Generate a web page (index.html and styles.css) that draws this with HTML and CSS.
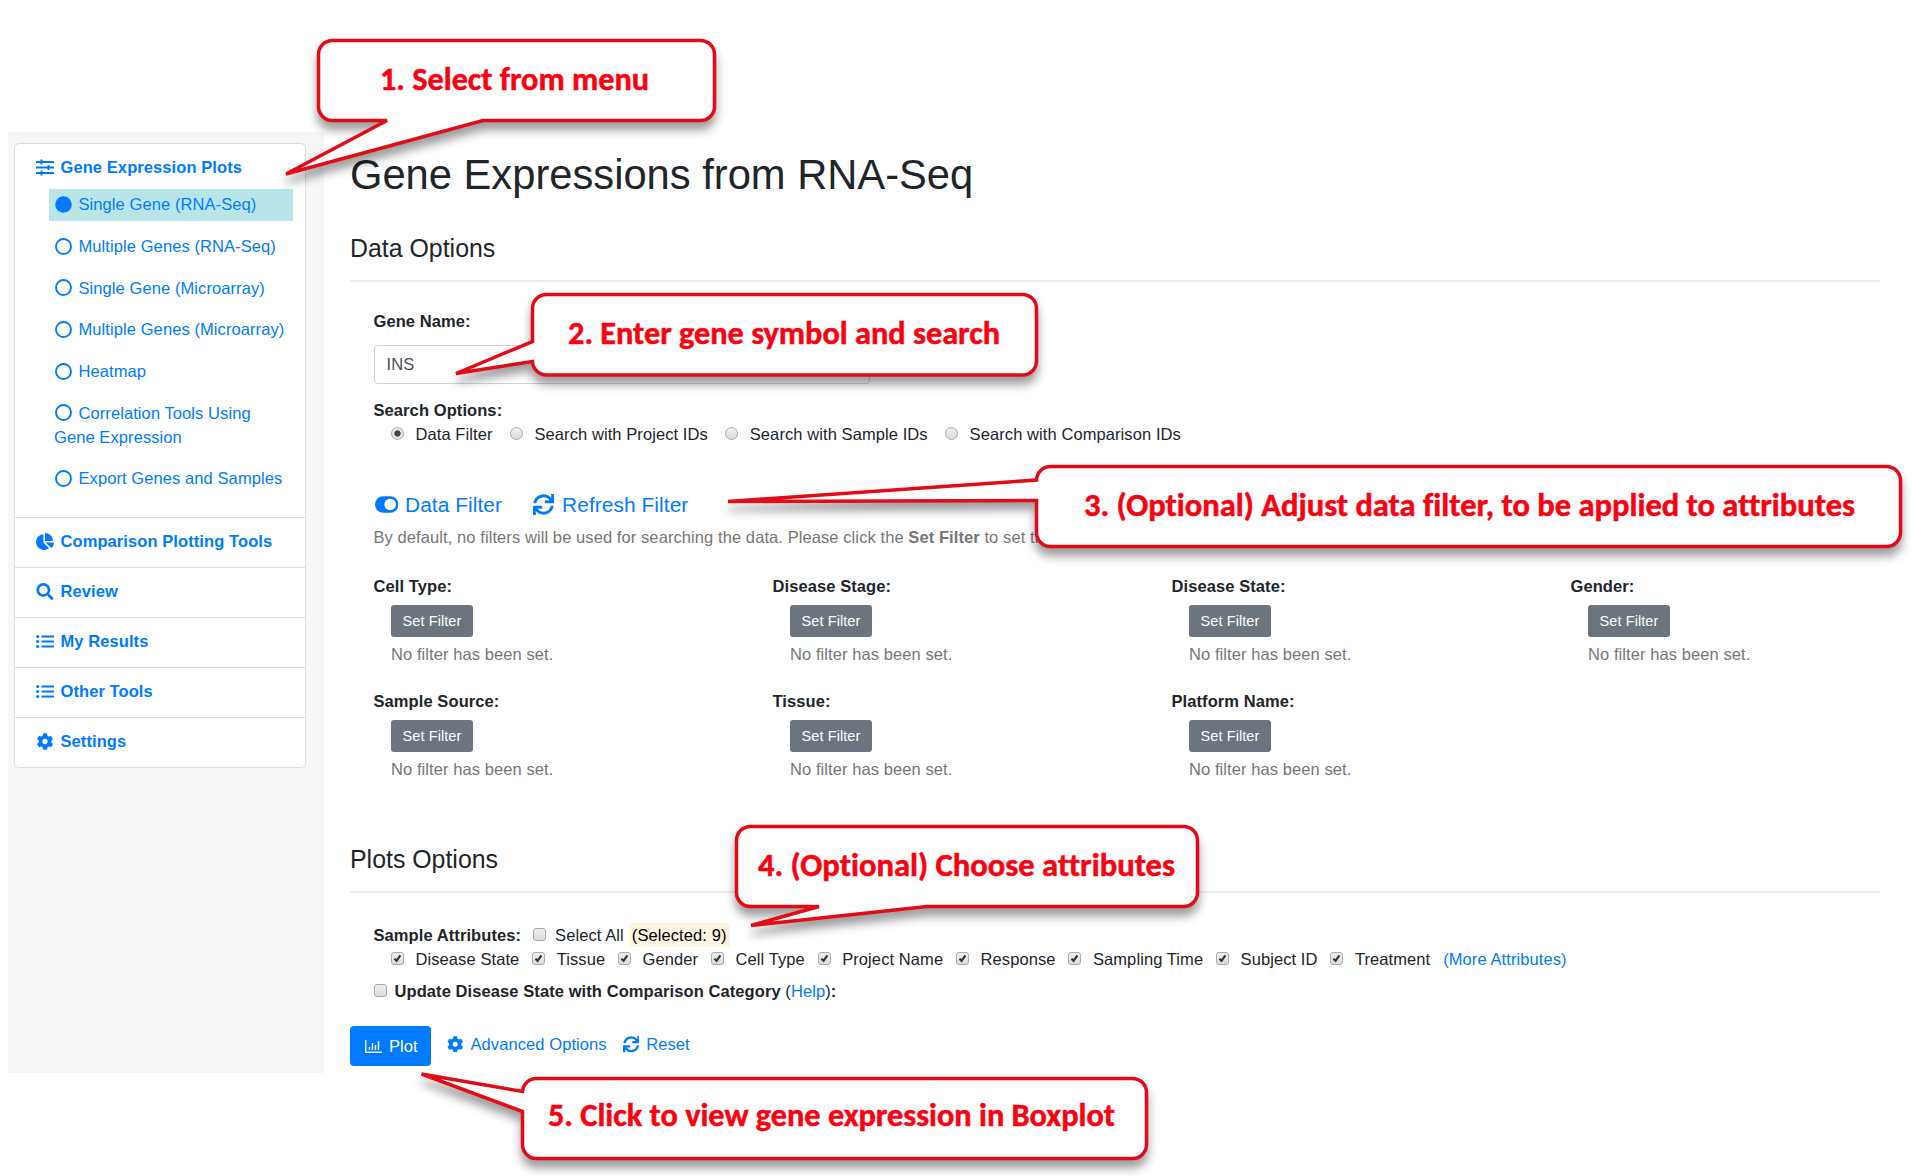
FILE: index.html
```html
<!DOCTYPE html>
<html lang="en">
<head>
<meta charset="utf-8">
<title>Gene Expressions from RNA-Seq</title>
<link rel="stylesheet" href="styles.css">
</head>
<body>
<svg class="defs" aria-hidden="true">
  <symbol id="sliders" viewBox="0 0 18 16"><path d="M0 2.5h18M0 8h18M0 13.5h18M5.500 0v5M12.500 5.500v5M5.500 11v5" fill="none" stroke="currentColor" stroke-width="2"/></symbol>
  <symbol id="dot" viewBox="0 0 17 17"><circle cx="8.500" cy="8.500" r="8.300" fill="currentColor"/></symbol>
  <symbol id="ring" viewBox="0 0 17 17"><circle cx="8.500" cy="8.500" r="7.500" fill="none" stroke="currentColor" stroke-width="1.900"/></symbol>
  <symbol id="pie" viewBox="0 0 544 512"><path fill="currentColor" d="M527.790 288H290.500l158.030 158.030c6.040 6.040 15.980 6.530 22.190.680 38.700-36.460 65.320-85.560 73.130-140.860 1.340-9.460-6.510-17.850-16.060-17.850zm-15.830-64.800C503.720 103.740 408.260 8.280 288.800.040 279.680-.590 272 7.100 272 16.240V240h223.770c9.140 0 16.820-7.680 16.190-16.800zM224 288V50.710c0-9.550-8.390-17.400-17.840-16.060C86.990 51.490-4.100 155.600.140 280.370 4.500 408.510 114.830 513.590 243.030 511.980c50.400-.630 96.970-16.870 135.260-44.030 7.900-5.600 8.420-17.230 1.570-24.080L224 288z"/></symbol>
  <symbol id="search" viewBox="0 0 512 512"><path fill="currentColor" d="M505 442.700L405.300 343c-4.500-4.500-10.600-7-17-7H372c27.600-35.300 44-79.700 44-128C416 93.100 322.900 0 208 0S0 93.100 0 208s93.100 208 208 208c48.300 0 92.700-16.400 128-44v16.300c0 6.400 2.500 12.500 7 17l99.700 99.700c9.400 9.400 24.600 9.400 33.900 0l28.300-28.300c9.400-9.400 9.400-24.600.100-34zM208 336c-70.700 0-128-57.200-128-128 0-70.700 57.200-128 128-128 70.700 0 128 57.200 128 128 0 70.700-57.200 128-128 128z"/></symbol>
  <symbol id="list" viewBox="0 0 18 14"><path d="M5.500 2H18M5.500 7H18M5.500 12H18" stroke="currentColor" stroke-width="2"/><g fill="currentColor"><circle cx="1.700" cy="2" r="1.600"/><circle cx="1.700" cy="7" r="1.600"/><circle cx="1.700" cy="12" r="1.600"/></g></symbol>
  <symbol id="cog" viewBox="0 0 512 512"><path fill="currentColor" d="M487.400 315.700l-42.600-24.600c4.300-23.200 4.300-47 0-70.200l42.600-24.600c4.900-2.800 7.100-8.600 5.500-14-11.100-35.600-30-67.800-54.700-94.600-3.800-4.100-10-5.100-14.800-2.300L380.800 110c-17.900-15.400-38.500-27.300-60.800-35.100V25.800c0-5.600-3.900-10.500-9.400-11.700-36.700-8.200-74.300-7.800-109.200 0-5.500 1.200-9.400 6.100-9.400 11.700V75c-22.200 7.900-42.800 19.800-60.800 35.100L88.700 85.500c-4.900-2.800-11-1.900-14.800 2.300-24.700 26.700-43.600 58.900-54.700 94.600-1.700 5.400.600 11.200 5.500 14L67.300 221c-4.300 23.200-4.300 47 0 70.200l-42.600 24.600c-4.900 2.800-7.100 8.600-5.500 14 11.100 35.600 30 67.800 54.700 94.600 3.800 4.100 10 5.100 14.800 2.300l42.600-24.600c17.900 15.400 38.500 27.300 60.800 35.100v49.200c0 5.600 3.900 10.500 9.400 11.700 36.700 8.200 74.300 7.800 109.200 0 5.500-1.200 9.400-6.100 9.400-11.700v-49.200c22.200-7.900 42.800-19.800 60.800-35.100l42.600 24.600c4.900 2.800 11 1.900 14.800-2.300 24.700-26.700 43.600-58.900 54.700-94.600 1.500-5.500-.700-11.300-5.600-14.100zM256 336c-44.100 0-80-35.900-80-80s35.900-80 80-80 80 35.900 80 80-35.900 80-80 80z"/></symbol>
  <symbol id="toggle" viewBox="0 0 24 17"><rect width="24" height="17" rx="8.500" fill="currentColor"/><circle cx="15.500" cy="8.500" r="5.900" fill="#fff"/></symbol>
  <symbol id="sync" viewBox="0 0 512 512"><path fill="currentColor" d="M440.650 12.570l4 82.770A247.160 247.160 0 0 0 255.830 8C134.730 8 33.910 94.920 12.290 209.820A12 12 0 0 0 24.090 224h49.050a12 12 0 0 0 11.670-9.260 175.910 175.910 0 0 1 317-56.940l-101.460-4.860a12 12 0 0 0-12.570 12v47.410a12 12 0 0 0 12 12H500a12 12 0 0 0 12-12V12a12 12 0 0 0-12-12h-47.370a12 12 0 0 0-11.980 12.570zM255.830 432a175.610 175.610 0 0 1-146-77.800l101.800 4.870a12 12 0 0 0 12.570-12v-47.400a12 12 0 0 0-12-12H12a12 12 0 0 0-12 12V500a12 12 0 0 0 12 12h47.350a12 12 0 0 0 12-12.600l-4.150-82.570A247.170 247.170 0 0 0 255.830 504c121.110 0 221.930-86.920 243.550-201.820a12 12 0 0 0-11.800-14.180h-49.050a12 12 0 0 0-11.670 9.260A175.860 175.860 0 0 1 255.830 432z"/></symbol>
  <symbol id="bars" viewBox="0 0 17 13"><path d="M.7 0v12.200H17M4.500 10V7M7.500 10V3M10.500 10V5M13.500 10V1" fill="none" stroke="currentColor" stroke-width="1.400"/></symbol>
  <symbol id="tick" viewBox="0 0 13 13"><path d="M2.900 6.800L5.400 9.300L9.900 2.900" fill="none" stroke="#333" stroke-width="2.500"/></symbol>
</svg>

<div class="page">
  <aside class="sidebar">
    <nav class="menu">
      <section class="group open">
        <a class="head"><svg class="ic"><use href="#sliders"/></svg>Gene Expression Plots</a>
        <ul class="sub">
          <li class="active"><svg class="ci"><use href="#dot"/></svg>Single Gene (RNA-Seq)</li>
          <li><svg class="ci"><use href="#ring"/></svg>Multiple Genes (RNA-Seq)</li>
          <li><svg class="ci"><use href="#ring"/></svg>Single Gene (Microarray)</li>
          <li><svg class="ci"><use href="#ring"/></svg>Multiple Genes (Microarray)</li>
          <li><svg class="ci"><use href="#ring"/></svg>Heatmap</li>
          <li><svg class="ci"><use href="#ring"/></svg>Correlation Tools Using<br>Gene Expression</li>
          <li><svg class="ci"><use href="#ring"/></svg>Export Genes and Samples</li>
        </ul>
      </section>
      <section class="group"><a class="head"><svg class="ic"><use href="#pie"/></svg>Comparison Plotting Tools</a></section>
      <section class="group"><a class="head"><svg class="ic"><use href="#search"/></svg>Review</a></section>
      <section class="group"><a class="head"><svg class="ic"><use href="#list"/></svg>My Results</a></section>
      <section class="group"><a class="head"><svg class="ic"><use href="#list"/></svg>Other Tools</a></section>
      <section class="group"><a class="head"><svg class="ic"><use href="#cog"/></svg>Settings</a></section>
    </nav>
  </aside>

  <main class="main">
    <h1>Gene Expressions from RNA-Seq</h1>
    <h2>Data Options</h2>
    <div class="body">
      <div class="label">Gene Name:</div>
      <div class="input">INS</div>
      <div class="label">Search Options:</div>
      <div class="choices radios">
        <label><i class="radio on"></i>Data Filter</label>
        <label><i class="radio"></i>Search with Project IDs</label>
        <label><i class="radio"></i>Search with Sample IDs</label>
        <label><i class="radio"></i>Search with Comparison IDs</label>
      </div>
      <div class="actions">
        <a><svg class="tog"><use href="#toggle"/></svg>Data Filter</a>
        <a><svg class="ref"><use href="#sync"/></svg>Refresh Filter</a>
      </div>
      <p class="hint">By default, no filters will be used for searching the data. Please click the <b>Set Filter</b> to set the filter.</p>
      <div class="filters">
        <div class="filter"><b>Cell Type:</b><span class="set">Set Filter</span><em>No filter has been set.</em></div>
        <div class="filter"><b>Disease Stage:</b><span class="set">Set Filter</span><em>No filter has been set.</em></div>
        <div class="filter"><b>Disease State:</b><span class="set">Set Filter</span><em>No filter has been set.</em></div>
        <div class="filter"><b>Gender:</b><span class="set">Set Filter</span><em>No filter has been set.</em></div>
        <div class="filter"><b>Sample Source:</b><span class="set">Set Filter</span><em>No filter has been set.</em></div>
        <div class="filter"><b>Tissue:</b><span class="set">Set Filter</span><em>No filter has been set.</em></div>
        <div class="filter"><b>Platform Name:</b><span class="set">Set Filter</span><em>No filter has been set.</em></div>
      </div>
    </div>
    <h2 class="plots">Plots Options</h2>
    <div class="body attrs">
      <div class="line"><b>Sample Attributes:</b><i class="box all"></i>Select All<span class="count">(Selected: 9)</span></div>
      <div class="choices checks">
        <label><svg class="box"><use href="#tick"/></svg>Disease State</label>
        <label><svg class="box"><use href="#tick"/></svg>Tissue</label>
        <label><svg class="box"><use href="#tick"/></svg>Gender</label>
        <label><svg class="box"><use href="#tick"/></svg>Cell Type</label>
        <label><svg class="box"><use href="#tick"/></svg>Project Name</label>
        <label><svg class="box"><use href="#tick"/></svg>Response</label>
        <label><svg class="box"><use href="#tick"/></svg>Sampling Time</label>
        <label><svg class="box"><use href="#tick"/></svg>Subject ID</label>
        <label><svg class="box"><use href="#tick"/></svg>Treatment</label>
        <a>(More Attributes)</a>
      </div>
      <div class="line update"><i class="box"></i><span><b>Update Disease State with Comparison Category</b> (<a>Help</a>)<b>:</b></span></div>
    </div>
    <div class="buttons">
      <span class="plot"><svg><use href="#bars"/></svg>Plot</span>
      <a><svg><use href="#cog"/></svg>Advanced Options</a>
      <a><svg><use href="#sync"/></svg>Reset</a>
    </div>
  </main>
</div>

<svg class="callouts" viewBox="0 0 1912 1176">
  <g class="bubble">
    <path d="M333 40.500H700.500a14 14 0 0 1 14 14V106.500a14 14 0 0 1-14 14H483L286 174L387 120.500H332.500a14 14 0 0 1-14-14V54.500a14 14 0 0 1 14-14z"/>
    <path d="M546.500 294.500H1022.500a14 14 0 0 1 14 14V361a14 14 0 0 1-14 14H546.500a14 14 0 0 1-14-13.500L456 373.500L532.500 341.500V308.500a14 14 0 0 1 14-14z"/>
    <path d="M1050.500 466.500H1886.500a14 14 0 0 1 14 14V532.500a14 14 0 0 1-14 14H1050.500a14 14 0 0 1-14-14V500.500L728 501.500L1036.500 480a14 14 0 0 1 14-13.500z"/>
    <path d="M750.500 826.500H1183.500a14 14 0 0 1 14 14V892.500a14 14 0 0 1-14 14H927L751 925.500L819 906.500H750.500a14 14 0 0 1-14-14V840.500a14 14 0 0 1 14-14z"/>
    <path d="M536.500 1078.500H1132.500a14 14 0 0 1 14 14V1144.500a14 14 0 0 1-14 14H536.500a14 14 0 0 1-14-14V1111.500L421.500 1074L522.500 1091.500a14 14 0 0 1 14-13z"/>
  </g>
  <g class="note">
    <text x="380" y="90" textLength="269" lengthAdjust="spacingAndGlyphs">1. Select from menu</text>
    <text x="568" y="343.500" textLength="432" lengthAdjust="spacingAndGlyphs">2. Enter gene symbol and search</text>
    <text x="1084" y="515.500" textLength="771" lengthAdjust="spacingAndGlyphs">3. (Optional) Adjust data filter, to be applied to attributes</text>
    <text x="758" y="875.500" textLength="417" lengthAdjust="spacingAndGlyphs">4. (Optional) Choose attributes</text>
    <text x="548" y="1126" textLength="567" lengthAdjust="spacingAndGlyphs">5. Click to view gene expression in Boxplot</text>
  </g>
</svg>
</body>
</html>
```
FILE: styles.css
```css
* { box-sizing: border-box; }
body { margin: 0; width: 1912px; height: 1176px; overflow: hidden; position: relative; background: #fff; color: #212529; font: 16.500px/24px "Liberation Sans", Arial, sans-serif; letter-spacing: .085px; }
.defs { position: absolute; width: 0; height: 0; }
a { color: #007bff; white-space: nowrap; }
svg { flex: none; }

.page { display: flex; align-items: flex-start; padding: 132px 32px 0 8px; }
.sidebar { width: 316px; height: 941px; padding: 11px 18px 0 6px; background: #f6f6f6; flex: none; }
.menu { background: #fff; border: 1px solid #dcdcdc; border-radius: 5px; color: #007bff; }
.group { height: 50px; border-top: 1.500px solid #dcdcdc; padding: 11px 0 0 21px; }
.group.open { height: 373px; border-top: 0; }
.head { display: flex; align-items: center; font-weight: bold; }
.ic { width: 18px; height: 17px; margin-right: 6.500px; }
.sub { list-style: none; margin: 10px 12px 0 13px; padding: 0; display: flex; flex-direction: column; gap: 9.700px; }
.sub li { padding: 3.400px 0 4.600px 5px; white-space: nowrap; }
.sub .active { background: #b9e5e8; }
.ci { width: 17px; height: 17px; margin: 0 6.500px 0 1px; vertical-align: -2.500px; }

.main { flex: 1; padding: 17px 0 0 26px; min-width: 0; }
h1, h2, p { margin: 0; font-weight: normal; }
h1 { font-size: 41.700px; line-height: 51px; height: 50px; letter-spacing: 0; }
h2 { font-size: 24.900px; line-height: 30px; letter-spacing: 0; margin-top: 34px; padding-bottom: 17px; border-bottom: 2px solid #ebebeb; height: 49px; }
.body { padding: 27px 0 0 23.500px; }
.label { font-weight: bold; }
.input { width: 496px; height: 38.500px; margin: 12px 0 14px; padding: 6px 12px; border: 1.500px solid #ced4da; border-radius: 4px; color: #495057; }
.choices { display: flex; padding-left: 17.500px; white-space: nowrap; }
.choices label { display: flex; align-items: center; }
.radios { gap: 17.400px; }
.checks { gap: 12.900px; }
.radio, .box { flex: none; width: 13px; height: 13px; border: 1px solid #a9a9a9; background: linear-gradient(#eee, #dcdcdc); }
.choices .radio, .choices .box { margin-right: 11.500px; }
.radio { border-radius: 50%; }
.radio.on { background: radial-gradient(circle, #444 0 2.800px, #e6e6e6 3.500px); }
.box { border-radius: 3px; }
.actions { display: flex; gap: 31px; margin-top: 44px; padding-left: 1px; font-size: 20.850px; line-height: 30px; }
.actions a, .buttons a { display: flex; align-items: center; }
.tog { width: 23.500px; height: 17px; margin-right: 7px; }
.ref { width: 21px; height: 21px; margin-right: 8px; }
.hint { margin-top: 5.500px; color: #777; white-space: nowrap; }
.filters { display: grid; grid-template-columns: repeat(4, 399px); row-gap: 23.300px; margin-top: 25px; }
.filter { display: flex; flex-direction: column; align-items: flex-start; height: 92px; }
.set { margin: 6.500px 0 5px 17.500px; width: 82px; height: 32px; border-radius: 3px; background: #6c757d; color: #fff; font-size: 14.500px; line-height: 32px; text-align: center; }
.filter em { margin-left: 17.500px; font-style: normal; color: #777; }

.plots { margin-top: 62.500px; }
.attrs { padding-top: 30px; }
.line { display: flex; align-items: center; white-space: nowrap; }
.all { margin: 0 9px 0 12px; }
.count { margin-left: 5px; padding: 0 3px; background: #fcf5e2; color: #000; }
.update { margin-top: 8px; }
.update .box { margin-right: 8px; }
.buttons { display: flex; align-items: flex-start; margin-top: 23.500px; }
.plot { display: flex; align-items: center; width: 81px; height: 39.500px; padding-left: 15px; border-radius: 4px; background: #007bff; color: #fff; margin-right: 16px; }
.plot svg { width: 17px; height: 13px; margin-right: 7px; }
.buttons a { height: 36px; margin-right: 16px; }
.buttons a svg { width: 16.500px; height: 16.500px; margin-right: 7px; }

.callouts { position: absolute; left: 0; top: 0; width: 1912px; height: 1176px; letter-spacing: 0; }
.bubble path { fill: #fff; stroke: #e30b17; stroke-width: 3.500px; filter: drop-shadow(0 8px 5px rgba(0, 0, 0, .38)); }
.note { fill: #fb0010; stroke: #fb0010; stroke-width: .5px; font: bold 32px Carlito, Lato, sans-serif; font-variant-ligatures: none; }
```
